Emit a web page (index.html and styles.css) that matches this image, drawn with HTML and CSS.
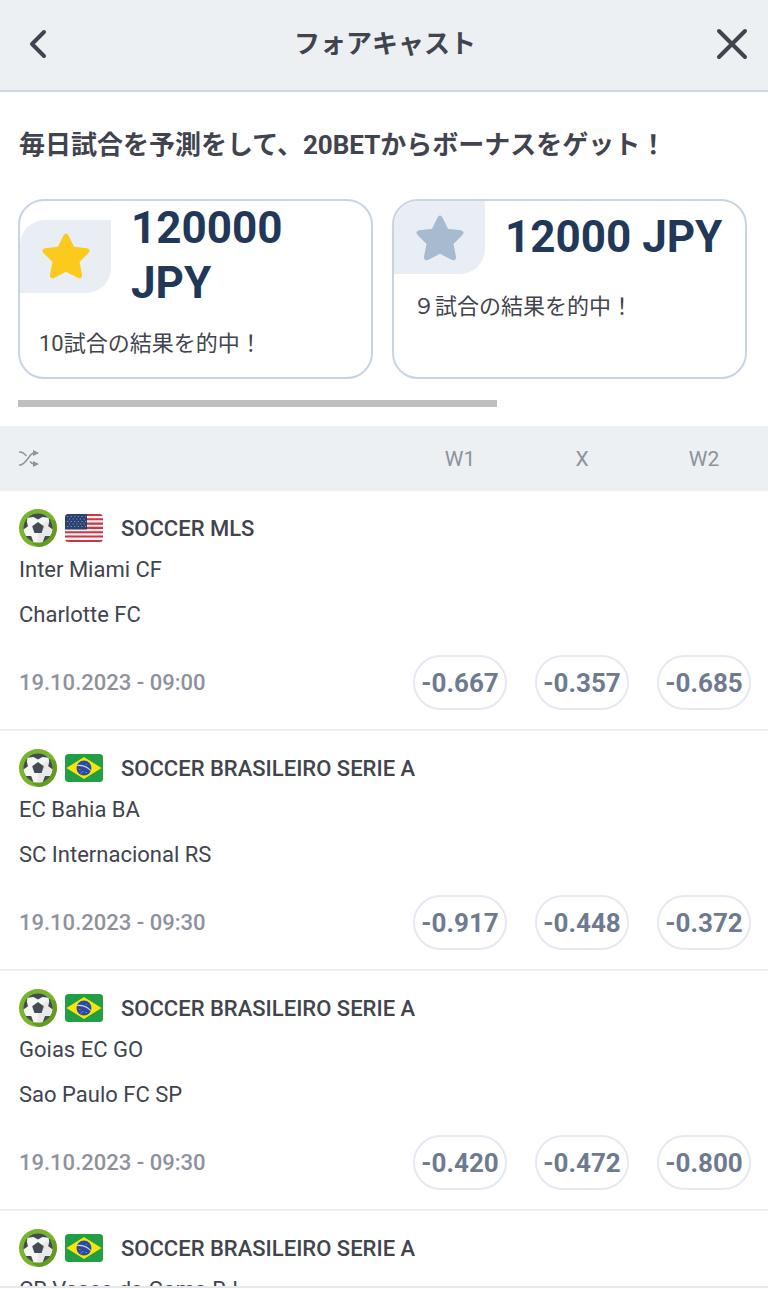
FILE: index.html
```html
<!DOCTYPE html>
<html lang="ja">
<head>
  <meta charset="UTF-8">
  <meta name="viewport" content="width=device-width, initial-scale=1.0">
  <title>フォアキャスト</title>
  <link rel="stylesheet" href="styles.css">
</head>
<body>
  <!-- Shared icons -->
  <svg class="sprite" aria-hidden="true">
    <symbol id="ball" viewBox="0 0 38 38">
      <circle cx="19" cy="19" r="19" fill="#78b42c"/>
      <path d="M29 9L33.500 14Q34 28 19 33.500L13 34Q19 38 19 38A19 19 0 0 0 36.500 12Z" fill="#659a20"/>
      <circle cx="19" cy="19" r="14.500" fill="#464a55"/>
      <path d="M14.500 8L19 10.500L23.500 8L29.500 8.800L30.200 12.500L29 17.200L33.500 20.500Q33 24 31 27H25.800L23.600 33Q19 34 14.400 33L12.200 27H7Q5 24 4.500 20.500L9 17.200L7.800 12.500L8.500 8.800Z" fill="#f5f5f5"/>
      <path d="M19 19L29.800 10.500L29 17.200L33.500 20.500Q33 24 31 27H25.800L23.600 33L19 33.500Z" fill="#e8e8e9"/>
      <path d="M19 13L24.800 17.300L22.600 24H15.400L13.200 17.300Z" fill="#464a55"/>
    </symbol>
    <symbol id="flag-us" viewBox="0 0 38 28">
      <clipPath id="us-clip"><rect width="38" height="28" rx="3.500"/></clipPath>
      <g clip-path="url(#us-clip)">
        <rect width="38" height="28" fill="#f6f0f1"/>
        <path d="M0 1H38M0 5.300H38M0 9.600H38M0 13.900H38M0 18.200H38M0 22.500H38M0 27H38" stroke="#c93744" stroke-width="2.100"/>
        <rect width="22" height="15.500" fill="#29426f"/>
        <path d="M2 2.500H21M4 5H21M2 7.500H21M4 10H21M2 12.500H21" stroke="#8797b3" stroke-width="1.200" stroke-dasharray="1.200 2.400"/>
      </g>
    </symbol>
    <symbol id="flag-br" viewBox="0 0 38 28">
      <rect width="38" height="28" rx="3.500" fill="#229e45"/>
      <path d="M19 3L36.500 14L19 25L1.500 14Z" fill="#f8e509"/>
      <circle cx="19" cy="14" r="7.500" fill="#2b49a3"/>
      <path d="M12.200 11.500Q20 10.800 25.800 16.600" fill="none" stroke="#c9d5ea" stroke-width="1.100"/>
      <path d="M14 15.500H15.500M17 17.500H18.500M15.500 19H17M20.500 18.500H22M21 10.500H22" stroke="#7389c6" stroke-width="1"/>
    </symbol>
    <symbol id="star" viewBox="0 0 48 46">
      <path d="M21.500 2.500Q24 -1.500 26.500 2.500L32 13.800L44.800 15.300Q49.500 16.500 46.500 20L37.500 29L40 41.500Q40.500 46 36 45L24 38.800L12 45Q7.500 46 8 41.500L10.500 29L1.500 20Q-1.500 16.500 3.200 15.300L16 13.800Z" fill="currentColor"/>
    </symbol>
  </svg>

  <header class="topbar">
    <button class="icon-btn" type="button" aria-label="戻る">
      <svg width="20" height="32" viewBox="0 0 20 32" fill="none" stroke="currentColor" stroke-width="4" stroke-linecap="round" stroke-linejoin="round"><path d="M16 4L4 16L16 28"/></svg>
    </button>
    <h1>フォアキャスト</h1>
    <button class="icon-btn" type="button" aria-label="閉じる">
      <svg width="32" height="32" viewBox="0 0 32 32" fill="none" stroke="currentColor" stroke-width="4" stroke-linecap="round"><path d="M3 3L29 29M29 3L3 29"/></svg>
    </button>
  </header>

  <main class="content">
    <section class="promo">
      <h2>毎日試合を予測をして、20BETからボーナスをゲット！</h2>
      <div class="cards">
        <article class="card">
          <div class="card-top">
            <span class="badge gold"><svg width="48" height="46"><use href="#star"/></svg></span>
            <strong>120000 JPY</strong>
          </div>
          <p>10試合の結果を的中！</p>
        </article>
        <article class="card">
          <div class="card-top">
            <span class="badge silver"><svg width="48" height="46"><use href="#star"/></svg></span>
            <strong>12000 JPY</strong>
          </div>
          <p>９試合の結果を的中！</p>
        </article>
      </div>
      <div class="scroll-track"><div class="scroll-thumb"></div></div>
    </section>

    <div class="odds-head">
      <svg class="shuffle" width="20" height="18" viewBox="0 0 20 18" fill="none" stroke="currentColor" stroke-width="1.600"><path d="M0 2H1Q4 2 7.500 6M0 15H1Q4 15 9 8.500Q12 3.500 15 3H16M11 11.500Q13 14 15 14H16"/><path d="M14 0L20 3L14 6ZM14 11L20 14L14 17Z" fill="currentColor" stroke="none"/></svg>
      <div class="odds-grid"><span>W1</span><span>X</span><span>W2</span></div>
    </div>

    <section class="match">
      <div class="league">
        <svg width="38" height="38"><use href="#ball"/></svg>
        <svg width="38" height="28"><use href="#flag-us"/></svg>
        <h3>SOCCER MLS</h3>
      </div>
      <p class="team">Inter Miami CF</p>
      <p class="team">Charlotte FC</p>
      <div class="match-foot">
        <time datetime="2023-10-19T09:00">19.10.2023 - 09:00</time>
        <div class="odds-grid">
          <button class="odd" type="button">-0.667</button>
          <button class="odd" type="button">-0.357</button>
          <button class="odd" type="button">-0.685</button>
        </div>
      </div>
    </section>

    <section class="match">
      <div class="league">
        <svg width="38" height="38"><use href="#ball"/></svg>
        <svg width="38" height="28"><use href="#flag-br"/></svg>
        <h3>SOCCER BRASILEIRO SERIE A</h3>
      </div>
      <p class="team">EC Bahia BA</p>
      <p class="team">SC Internacional RS</p>
      <div class="match-foot">
        <time datetime="2023-10-19T09:30">19.10.2023 - 09:30</time>
        <div class="odds-grid">
          <button class="odd" type="button">-0.917</button>
          <button class="odd" type="button">-0.448</button>
          <button class="odd" type="button">-0.372</button>
        </div>
      </div>
    </section>

    <section class="match">
      <div class="league">
        <svg width="38" height="38"><use href="#ball"/></svg>
        <svg width="38" height="28"><use href="#flag-br"/></svg>
        <h3>SOCCER BRASILEIRO SERIE A</h3>
      </div>
      <p class="team">Goias EC GO</p>
      <p class="team">Sao Paulo FC SP</p>
      <div class="match-foot">
        <time datetime="2023-10-19T09:30">19.10.2023 - 09:30</time>
        <div class="odds-grid">
          <button class="odd" type="button">-0.420</button>
          <button class="odd" type="button">-0.472</button>
          <button class="odd" type="button">-0.800</button>
        </div>
      </div>
    </section>

    <section class="match">
      <div class="league">
        <svg width="38" height="38"><use href="#ball"/></svg>
        <svg width="38" height="28"><use href="#flag-br"/></svg>
        <h3>SOCCER BRASILEIRO SERIE A</h3>
      </div>
      <p class="team">CR Vasco da Gama RJ</p>
    </section>
  </main>
</body>
</html>
```

FILE: styles.css
```css
/* Basic Reset */
* {
  margin: 0;
  padding: 0;
  box-sizing: border-box;
}

body {
  display: flex;
  flex-direction: column;
  height: 100vh;
  padding-bottom: 1px;
  background-color: #fff;
  color: #41444e;
  font-family: Roboto, "Noto Sans CJK JP", sans-serif;
  font-size: 22px;
}

button {
  background: none;
  border: none;
  color: inherit;
  font-family: inherit;
  cursor: pointer;
}

svg {
  display: block;
  flex: none;
}

.sprite {
  position: absolute;
  width: 0;
  height: 0;
}

/* Top bar */
.topbar {
  display: flex;
  justify-content: space-between;
  align-items: center;
  flex: none;
  height: 92px;
  padding: 0 18px 2px 20px;
  background-color: #ecf0f3;
  border-bottom: 2px solid #ccd5e2;
}

.topbar h1 {
  font-size: 26px;
  font-weight: 700;
  line-height: 40px;
}

.icon-btn {
  display: flex;
  justify-content: center;
  align-items: center;
  width: 36px;
  height: 44px;
}

/* Scrolling content */
.content {
  flex: 1;
  min-height: 0;
  overflow: hidden;
  border-bottom: 2px solid #e2e8f0;
}

.promo {
  padding: 33px 18px 19px;
}

.promo h2 {
  padding-left: 1px;
  font-size: 26px;
  font-weight: 700;
  line-height: 40px;
}

.cards {
  display: flex;
  gap: 19px;
  margin-top: 34px;
  overflow: hidden;
}

.card {
  flex: 0 0 calc(50% - 11px);
  height: 180px;
  border: 2px solid #c9d4e3;
  border-radius: 26px;
  overflow: hidden;
}

.card-top {
  display: flex;
  align-items: center;
  gap: 20px;
  padding-right: 8px;
}

.card strong {
  color: #213859;
  font-size: 44px;
  font-weight: 700;
  line-height: 55px;
}

.card p {
  margin-top: 16px;
  padding: 0 19px;
  line-height: 33px;
}

.badge {
  display: flex;
  justify-content: center;
  align-items: center;
  flex: none;
  width: 91px;
  height: 73px;
  background-color: #e9edf4;
  border-radius: 25px 0;
}

.gold {
  color: #fbca1c;
}

.silver {
  color: #a7bbd0;
}

.scroll-track {
  margin-top: 21px;
}

.scroll-thumb {
  width: 65.4%;
  height: 7px;
  background-color: #bfbfbf;
}

/* Odds table */
.odds-head {
  display: flex;
  justify-content: space-between;
  align-items: center;
  height: 65px;
  padding: 0 17px 0 19px;
  background-color: #ecf0f3;
  color: #8d929c;
  font-size: 21px;
  text-align: center;
}

.odds-grid {
  display: grid;
  grid-template-columns: repeat(3, 94px);
  gap: 28px;
}

.match {
  padding: 18px 17px 19px 19px;
  border-bottom: 2px solid #e9eef3;
}

.league {
  display: flex;
  align-items: center;
  gap: 8px;
  height: 38px;
}

.league h3 {
  margin-left: 10px;
  font-size: 22px;
  font-weight: 500;
}

.team {
  line-height: 45px;
}

.match-foot {
  display: flex;
  justify-content: space-between;
  align-items: center;
  margin-top: 18px;
}

.match-foot time {
  color: #8d929c;
  font-weight: 500;
}

.odd {
  height: 55px;
  border: 2px solid #e5eaf2;
  border-radius: 28px;
  color: #6e7b8f;
  font-size: 26px;
  font-weight: 700;
}
```
